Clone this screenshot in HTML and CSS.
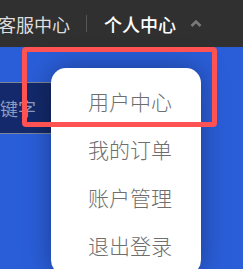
FILE: index.html
```html
<!DOCTYPE html>
<html>
<head>
    <meta charset="utf-8" />
    <title>个人中心</title>
    <link rel="stylesheet" href="styles.css">
</head>
<body>
    <header class="topbar">
        <a class="nav-link" href="#">客服中心</a>
        <span class="divider"></span>
        <a class="nav-link active" href="#">个人中心</a>
        <svg class="chevron" width="12" height="8" viewBox="0 0 12 8">
            <path d="M1.5 7 L6 2.5 L10.5 7" fill="none" stroke="#7a7a7a" stroke-width="2.6" />
        </svg>
    </header>

    <main class="banner">
        <div class="search">
            <span class="placeholder">关键字</span>
        </div>
    </main>

    <!-- opened menu under 个人中心 -->
    <ul class="dropdown">
        <li>用户中心</li>
        <li>我的订单</li>
        <li>账户管理</li>
        <li>退出登录</li>
    </ul>

    <div class="highlight"></div>
</body>
</html>
```

FILE: styles.css
```css
body {
    margin: 0;
    padding: 0;
    height: 269px;
    overflow: hidden;
    position: relative;
    background: #2a5ed9;
    font-family: "Noto Sans CJK SC", "Noto Sans", sans-serif;
}

.topbar {
    height: 47px;
    display: flex;
    align-items: center;
    background: #303030;
    margin-left: -2px;
}
.nav-link {
    font-size: 18px;
    line-height: 20px;
    color: #dedede;
    text-decoration: none;
}
.nav-link.active {
    color: #ffffff;
    font-weight: 500;
}
.divider {
    width: 1px;
    height: 17px;
    background: #575757;
    margin: 0 17px 0 16px;
}
.chevron {
    margin-left: 14px;
    margin-top: -1px;
}

.banner {
    padding-top: 35px;
}
.search {
    height: 50px;
    width: 120px;
    display: flex;
    align-items: center;
    background: #13296b;
    border-top: 1px solid #7f8596;
    border-bottom: 1px solid #7f8596;
    overflow: hidden;
}
.placeholder {
    margin-left: -18px;
    font-size: 18px;
    color: #8e9bbf;
    white-space: nowrap;
}

.dropdown {
    position: absolute;
    left: 51px;
    top: 68px;
    width: 150px;
    height: 207px;
    margin: 0;
    padding: 9px 0 0 8px;
    box-sizing: border-box;
    list-style: none;
    background: #ffffff;
    border-radius: 15px;
    box-shadow: 0 0 28px rgba(0, 0, 0, 0.35);
}
.dropdown li {
    line-height: 48px;
    font-size: 21px;
    font-weight: 300;
    color: #6e6e6e;
    text-align: center;
}

.highlight {
    position: absolute;
    left: 22px;
    top: 47px;
    width: 195px;
    height: 80px;
    box-sizing: border-box;
    border: 5px solid #ff5353;
    border-radius: 4px;
}
```
